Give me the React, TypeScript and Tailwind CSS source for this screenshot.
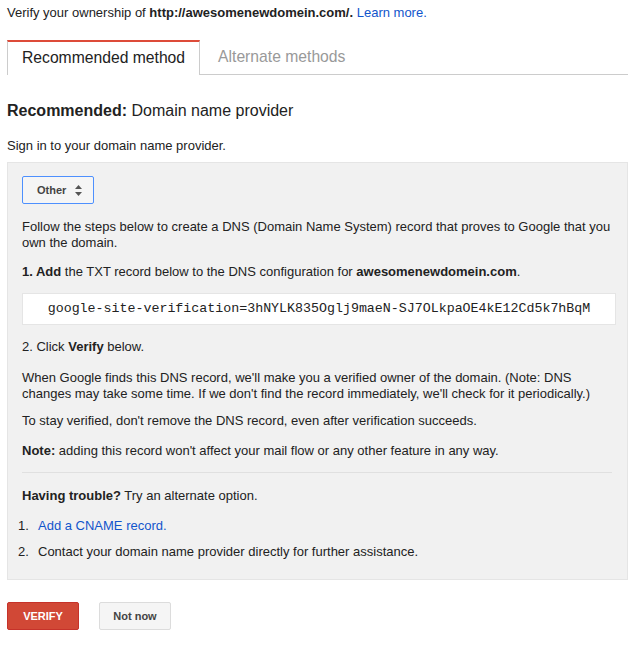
import React from 'react'

const body = { fontFamily: '"Liberation Sans", Arial, sans-serif' }

const SelectArrows = () => (
  <svg width="7" height="11" viewBox="0 0 7 11" className="ml-[9px]">
    <path d="M3.5 0 L7 4 L0 4 Z" fill="#555" />
    <path d="M3.5 11 L7 7 L0 7 Z" fill="#555" />
  </svg>
)

const App = () => {
  return (
    <div className="w-[637px] h-[649px] bg-white text-[13px] text-[#222] leading-[16px]" style={body}>
      <div className="pl-[7px] pt-[5px]">
        Verify your ownership of <b>http://awesomenewdomein.com/.</b>{' '}
        <a href="#" className="text-[#15c]">Learn more.</a>
      </div>

      <div className="mt-[19px] ml-[7px] mr-[9px] flex items-end border-b border-[#ccc]">
        <div className="-mb-px h-[35px] border-t-2 border-t-[#dd4b39] border-x border-x-[#ccc] bg-white px-[14px] pt-[6px] text-[15.7px] leading-[20px] text-[#222]">
          Recommended method
        </div>
        <div className="h-[34px] px-[18px] pt-[7px] text-[15.7px] leading-[20px] text-[#999]">
          Alternate methods
        </div>
      </div>

      <div className="pl-[7px] mt-[26px] text-[16px] leading-[20px]">
        <b>Recommended:</b> Domain name provider
      </div>
      <div className="pl-[7px] mt-[17px]">Sign in to your domain name provider.</div>

      <div className="mt-[8px] ml-[7px] mr-[9px] h-[418px] border border-[#e5e5e5] bg-[#f1f1f1] pl-[14px] pr-[11px] pt-[13px]">
        <div className="flex h-[28px] w-[72px] items-center rounded-[2px] border border-[#4d90fe] bg-[#f5f5f5] pl-[14px] text-[11px] font-bold text-[#444]">
          Other
          <SelectArrows />
        </div>

        <p className="mt-[15px]">
          Follow the steps below to create a DNS (Domain Name System) record that proves to Google that you own the domain.
        </p>
        <p className="mt-[13px]">
          <b>1. Add</b> the TXT record below to the DNS configuration for <b>awesomenewdomein.com</b>.
        </p>
        <div
          className="mt-[13px] flex h-[32px] items-center justify-center border border-[#e5e5e5] bg-white text-[13.3px] text-[#222]"
          style={{ fontFamily: '"Liberation Mono", "Courier New", monospace' }}
        >
          google-site-verification=3hNYLK835Oglj9maeN-SJ7OLkpaOE4kE12Cd5k7hBqM
        </div>
        <p className="mt-[14px]">
          2. Click <b>Verify</b> below.
        </p>
        <p className="mt-[15px]">
          When Google finds this DNS record, we'll make you a verified owner of the domain. (Note: DNS changes may take some time. If we don't find the record immediately, we'll check for it periodically.)
        </p>
        <p className="mt-[11px]">To stay verified, don't remove the DNS record, even after verification succeeds.</p>
        <p className="mt-[14px]">
          <b>Note:</b> adding this record won't affect your mail flow or any other feature in any way.
        </p>
        <div className="mt-[13px] mr-[4px] border-t border-[#e0e0e0]" />
        <p className="mt-[15px]">
          <b>Having trouble?</b> Try an alternate option.
        </p>
        <ol className="mt-[14px] -ml-[4px]">
          <li className="flex">
            <span className="w-[20px]">1.</span>
            <a href="#" className="text-[#15c]">Add a CNAME record.</a>
          </li>
          <li className="mt-[10px] flex">
            <span className="w-[20px]">2.</span>
            <span>Contact your domain name provider directly for further assistance.</span>
          </li>
        </ol>
      </div>

      <div className="mt-[22px] ml-[7px] flex gap-[20px]">
        <button className="h-[28px] w-[72px] rounded-[2px] border border-[#c6322a] bg-[#d14836] text-[11px] font-bold text-white">
          VERIFY
        </button>
        <button className="h-[28px] w-[72px] rounded-[2px] border border-[#dcdcdc] bg-[#f5f5f5] text-[11px] font-bold text-[#444]">
          Not now
        </button>
      </div>
    </div>
  )
}

export default App
